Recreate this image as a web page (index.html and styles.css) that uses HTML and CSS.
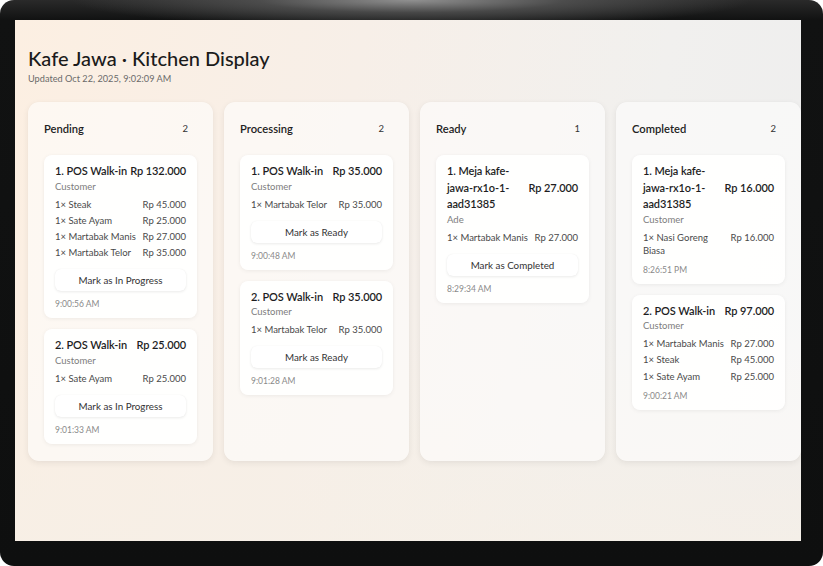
FILE: index.html
```html
<!DOCTYPE html>
<html lang="en">
<head>
<meta charset="utf-8">
<title>Kafe Jawa · Kitchen Display</title>
<link rel="stylesheet" href="styles.css">
</head>
<body>
<div class="device">
  <div class="screen">
    <header class="top">
      <h1 class="title">Kafe Jawa · Kitchen Display</h1>
      <p class="updated">Updated Oct 22, 2025, 9:02:09 AM</p>
    </header>
    <div class="board">
      <section class="col">
        <div class="col-head"><h2 class="col-name">Pending</h2><span class="count">2</span></div>
        <div class="cards">
          <article class="card">
            <div class="card-head"><span class="order">1. POS Walk-in</span><span class="total">Rp 132.000</span></div>
            <div class="customer">Customer</div>
            <ul class="items">
              <li class="item"><span class="name">1× Steak</span><span class="price">Rp 45.000</span></li>
              <li class="item"><span class="name">1× Sate Ayam</span><span class="price">Rp 25.000</span></li>
              <li class="item"><span class="name">1× Martabak Manis</span><span class="price">Rp 27.000</span></li>
              <li class="item"><span class="name">1× Martabak Telor</span><span class="price">Rp 35.000</span></li>
            </ul>
            <button class="action">Mark as In Progress</button>
            <div class="time">9:00:56 AM</div>
          </article>
          <article class="card">
            <div class="card-head"><span class="order">2. POS Walk-in</span><span class="total">Rp 25.000</span></div>
            <div class="customer">Customer</div>
            <ul class="items">
              <li class="item"><span class="name">1× Sate Ayam</span><span class="price">Rp 25.000</span></li>
            </ul>
            <button class="action">Mark as In Progress</button>
            <div class="time">9:01:33 AM</div>
          </article>
        </div>
      </section>
      <section class="col">
        <div class="col-head"><h2 class="col-name">Processing</h2><span class="count">2</span></div>
        <div class="cards">
          <article class="card">
            <div class="card-head"><span class="order">1. POS Walk-in</span><span class="total">Rp 35.000</span></div>
            <div class="customer">Customer</div>
            <ul class="items">
              <li class="item"><span class="name">1× Martabak Telor</span><span class="price">Rp 35.000</span></li>
            </ul>
            <button class="action">Mark as Ready</button>
            <div class="time">9:00:48 AM</div>
          </article>
          <article class="card">
            <div class="card-head"><span class="order">2. POS Walk-in</span><span class="total">Rp 35.000</span></div>
            <div class="customer">Customer</div>
            <ul class="items">
              <li class="item"><span class="name">1× Martabak Telor</span><span class="price">Rp 35.000</span></li>
            </ul>
            <button class="action">Mark as Ready</button>
            <div class="time">9:01:28 AM</div>
          </article>
        </div>
      </section>
      <section class="col">
        <div class="col-head"><h2 class="col-name">Ready</h2><span class="count">1</span></div>
        <div class="cards">
          <article class="card">
            <div class="card-head"><span class="order">1. Meja kafe-jawa-rx1o-1-aad31385</span><span class="total">Rp 27.000</span></div>
            <div class="customer">Ade</div>
            <ul class="items">
              <li class="item"><span class="name">1× Martabak Manis</span><span class="price">Rp 27.000</span></li>
            </ul>
            <button class="action">Mark as Completed</button>
            <div class="time">8:29:34 AM</div>
          </article>
        </div>
      </section>
      <section class="col">
        <div class="col-head"><h2 class="col-name">Completed</h2><span class="count">2</span></div>
        <div class="cards">
          <article class="card">
            <div class="card-head"><span class="order">1. Meja kafe-jawa-rx1o-1-aad31385</span><span class="total">Rp 16.000</span></div>
            <div class="customer">Customer</div>
            <ul class="items">
              <li class="item"><span class="name">1× Nasi Goreng Biasa</span><span class="price">Rp 16.000</span></li>
            </ul>
            <div class="time">8:26:51 PM</div>
          </article>
          <article class="card">
            <div class="card-head"><span class="order">2. POS Walk-in</span><span class="total">Rp 97.000</span></div>
            <div class="customer">Customer</div>
            <ul class="items">
              <li class="item"><span class="name">1× Martabak Manis</span><span class="price">Rp 27.000</span></li>
              <li class="item"><span class="name">1× Steak</span><span class="price">Rp 45.000</span></li>
              <li class="item"><span class="name">1× Sate Ayam</span><span class="price">Rp 25.000</span></li>
            </ul>
            <div class="time">9:00:21 AM</div>
          </article>
        </div>
      </section>
    </div>
  </div>
</div>
</body>
</html>
```
FILE: styles.css
```css
* { box-sizing: border-box; }
html, body { margin: 0; padding: 0; background: #ffffff; }
body { font-family: "Lato", "Noto Sans", sans-serif; color: #1e1e1e; }

.device {
  width: 823px;
  height: 566px;
  border-radius: 14px;
  overflow: hidden;
  padding: 20px 22px 25px 15px;
  background:
    radial-gradient(ellipse 340px 28px at 50% 0, rgba(150,150,150,0.95) 0%, rgba(95,95,95,0.65) 45%, rgba(20,20,20,0) 100%),
    linear-gradient(to bottom, #2a2a2a 0, #111212 20px, #0e0f0f 100%);
}

.screen {
  width: 786px;
  height: 521px;
  overflow: hidden;
  padding: 26px 0 0 13px;
  background:
    linear-gradient(to bottom, rgba(246,240,231,0) 55%, rgba(246,239,230,0.75) 100%),
    linear-gradient(100deg, #fcefe2 0%, #f7efe8 40%, #f1f0ee 75%, #eeeeee 100%);
}

.top { margin: 0; }
.title {
  margin: 0;
  font-size: 20px;
  line-height: 24px;
  font-weight: 500;
  color: #1b1b1b;
}
.updated {
  margin: 2px 0 0;
  font-size: 9.2px;
  line-height: 13px;
  color: #6a6a6a;
}

.board {
  margin-top: 17px;
  display: grid;
  grid-template-columns: repeat(4, 185px);
  gap: 11px;
  align-items: stretch;
}

.col {
  min-height: 359px;
  padding: 16px 16px 17px;
  border-radius: 11px;
  background: rgba(255,255,255,0.55);
  box-shadow: 0 2px 6px rgba(0,0,0,0.07), 0 0 1px rgba(0,0,0,0.05);
}

.col-head {
  display: flex;
  align-items: center;
  justify-content: space-between;
  height: 20px;
}
.col-name {
  margin: 0;
  font-size: 11.2px;
  font-weight: 600;
  color: #222;
}
.count {
  font-size: 9.5px;
  color: #333;
  padding: 2px 8px;
  margin-right: 1px;
}

.cards {
  margin-top: 17px;
  display: flex;
  flex-direction: column;
  gap: 11px;
}

.card {
  padding: 8px 11px 8px;
  border-radius: 8px;
  background: rgba(255,255,255,0.88);
  box-shadow: 0 1px 4px rgba(0,0,0,0.06), 0 0 1px rgba(0,0,0,0.04);
}

.card-head {
  display: flex;
  align-items: center;
  justify-content: space-between;
  gap: 3px;
  font-size: 11px;
  line-height: 16.5px;
  font-weight: 600;
  letter-spacing: -0.1px;
  color: #1e1e1e;
}
.order { flex: 1 1 auto; min-width: 0; }
.total { flex: 0 0 auto; }

.customer {
  font-size: 9.5px;
  line-height: 13px;
  color: #7d7d7d;
}

.items {
  list-style: none;
  margin: 5px 0 0;
  padding: 0;
  display: flex;
  flex-direction: column;
  gap: 3.3px;
}
.item {
  display: flex;
  justify-content: space-between;
  align-items: flex-start;
  gap: 4px;
  font-size: 9.5px;
  line-height: 13px;
  color: #4a4a4a;
}
.name { flex: 1 1 auto; min-width: 0; }
.price { flex: 0 0 auto; }

.action {
  display: block;
  width: 100%;
  height: 22px;
  margin-top: 10px;
  padding: 0;
  border: 0;
  border-radius: 6px;
  background: #ffffff;
  box-shadow: 0 1px 3px rgba(0,0,0,0.08), 0 0 1px rgba(0,0,0,0.06);
  font-family: inherit;
  font-size: 9.8px;
  color: #333;
}

.time {
  margin-top: 8px;
  font-size: 8.5px;
  line-height: 11px;
  color: #8a8a8a;
}
```
